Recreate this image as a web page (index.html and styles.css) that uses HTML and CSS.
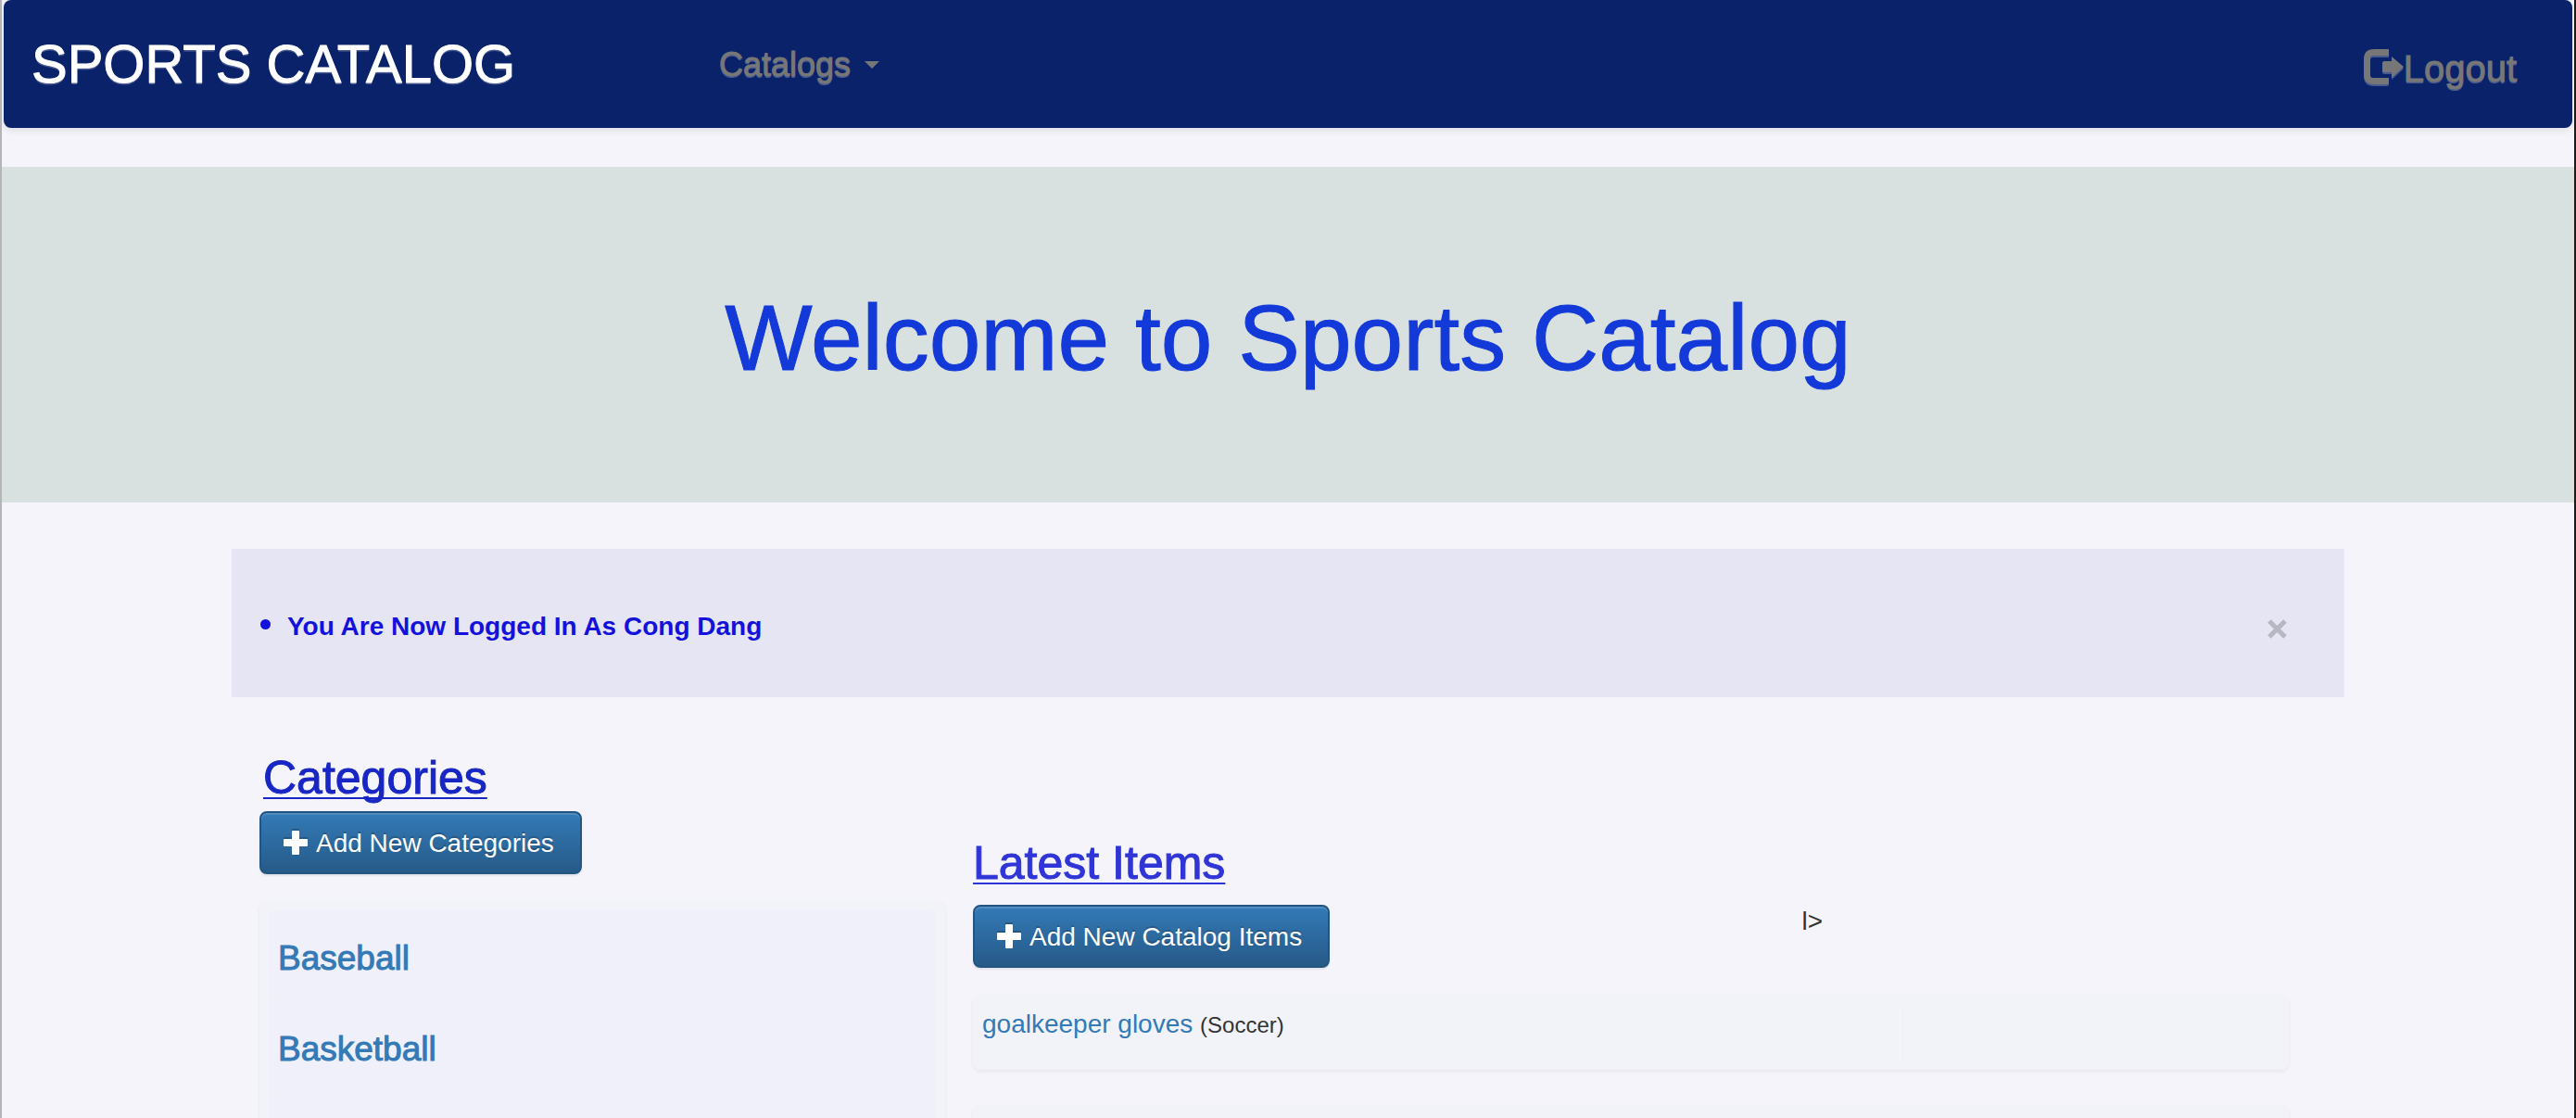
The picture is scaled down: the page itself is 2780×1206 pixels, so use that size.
FILE: index.html
```html
<!DOCTYPE html>
<html lang="en">
<head>
<meta charset="utf-8">
<title>Sports Catalog</title>
<link rel="stylesheet" href="styles.css">
</head>
<body>
<nav class="navbar">
  <a class="brand" href="#">SPORTS CATALOG</a>
  <button class="menu" type="button">Catalogs<span class="caret"></span></button>
  <a class="logout" href="#"><svg class="logout-icon" viewBox="0 0 43 38" aria-hidden="true"><path d="M27 0H11Q0 0 0 11V27Q0 38 11 38H25Q27 38 27 36V31H10Q7 31 7 28V10Q7 7 10 7H27ZM30 8L43 19L30 31V25H22Q20 25 20 23V15Q20 13 22 13H30Z"/></svg>Logout</a>
</nav>
<header class="hero"><h1>Welcome to Sports Catalog</h1></header>
<main class="container">
  <div class="alert">
    <ul><li>You Are Now Logged In As Cong Dang</li></ul>
    <button class="close" type="button" aria-label="Close"><svg viewBox="0 0 21 21" aria-hidden="true"><path d="M2 2L19 19M19 2L2 19"/></svg></button>
  </div>
  <div class="columns">
    <section class="categories">
      <h2>Categories</h2>
      <button class="btn" type="button"><svg class="plus" viewBox="0 0 26 26" aria-hidden="true"><path d="M10 0h6q1 0 1 1v8h8q1 0 1 1v6q0 1-1 1h-8v8q0 1-1 1h-6q-1 0-1-1v-8H1q-1 0-1-1v-6q0-1 1-1h8V1q0-1 1-1z"/></svg>Add New Categories</button>
      <ul class="panel category-list">
        <li><a href="#">Baseball</a></li>
        <li><a href="#">Basketball</a></li>
        <li></li>
      </ul>
    </section>
    <section class="latest">
      <h2>Latest Items</h2>
      <div class="actions">
        <button class="btn" type="button"><svg class="plus" viewBox="0 0 26 26" aria-hidden="true"><path d="M10 0h6q1 0 1 1v8h8q1 0 1 1v6q0 1-1 1h-8v8q0 1-1 1h-6q-1 0-1-1v-8H1q-1 0-1-1v-6q0-1 1-1h8V1q0-1 1-1z"/></svg>Add New Catalog Items</button>
        <span class="stray">l&gt;</span>
      </div>
      <div class="panel item"><div class="item-body"><a href="#">goalkeeper gloves</a> <small>(Soccer)</small></div></div>
      <div class="panel item"></div>
    </section>
  </div>
</main>
</body>
</html>
```
FILE: styles.css
```css
* { box-sizing: border-box; }
html { height: 100%; overflow: hidden; background: #f5f4fa; }
body {
  margin: 0;
  height: 100%;
  overflow: hidden;
  border-left: 2px solid #b5b5b8;
  border-right: 2px solid #1b1c18;
  background: #f5f4fa;
  color: #333;
  font: 28px/40px "Liberation Sans", Arial, sans-serif;
}
a { color: #337ab7; text-decoration: none; }
button { font: inherit; }
h1, h2, ul { margin: 0; padding: 0; }
h1, h2 { font-weight: 400; }

.navbar {
  display: flex;
  align-items: center;
  height: 138px;
  margin: 0 2px 42px;
  padding: 0 60px 0 30px;
  border-radius: 8px;
  background: #0a226a;
  box-shadow: 0 2px 10px rgba(0, 0, 0, .1);
  text-shadow: 0 2px 0 rgba(255, 255, 255, .25);
}
.brand { flex: none; width: 22%; min-width: 540px; color: #fff; font-size: 58px; line-height: 70px; -webkit-text-stroke: 1px #fff; }
.menu {
  display: flex;
  align-items: center;
  margin-left: 152px;
  padding: 2px 0 0;
  border: 0;
  background: none;
  color: #777;
  font-size: 36px;
  text-shadow: inherit;
  -webkit-text-stroke: 1px #777;
}
.caret { margin-left: 15px; border: 8px solid transparent; border-top-color: #777; border-bottom: 0; }
.logout { display: flex; align-items: center; margin-left: auto; padding-top: 10px; color: #777; font-size: 40px; -webkit-text-stroke: 1px #777; }
.logout-icon { width: 43px; height: 38px; margin-bottom: 4px; fill: #777; filter: drop-shadow(0 2px 0 rgba(255, 255, 255, .25)); }

.hero { height: 362px; padding-top: 124px; background: #d8e1e0; text-align: center; }
.hero h1 { color: #1339d9; font-size: 100px; line-height: 120px; -webkit-text-stroke: 1px #1339d9; }

.container { margin: 50px 248px 0; }
.alert {
  display: flex;
  align-items: center;
  justify-content: space-between;
  height: 160px;
  padding: 0 62px 0 60px;
  background: #e5e5f3;
  color: #1212dc;
  font-weight: 700;
}
.alert ul { padding-top: 4px; }
.alert li::marker { font-size: 36px; }
.close { display: flex; padding: 12px 0 0; border: 0; background: none; }
.close svg { width: 21px; height: 21px; fill: none; stroke: #b7b7c2; stroke-width: 5; }

.columns { display: flex; gap: 30px; padding: 57px 60px 0 30px; }
.categories { flex: 740 1 0; }
.latest { flex: 1420 1 0; padding-top: 92px; }
h2 {
  font-size: 50px;
  line-height: 60px;
  text-decoration: underline 2px;
  text-underline-offset: 4px;
  text-decoration-skip-ink: none;
  -webkit-text-stroke: 1px currentColor;
}
.categories h2 { margin-bottom: 6px; padding: 0 4px; color: #1826c4; }
.latest h2 { margin-bottom: 15px; color: #2f35d6; }
.btn {
  display: inline-flex;
  align-items: center;
  gap: 9px;
  height: 68px;
  padding: 1px 28px 0 24px;
  border: 2px solid #245580;
  border-radius: 8px;
  background: linear-gradient(#337ab7, #265a88);
  box-shadow: inset 0 2px 0 rgba(255, 255, 255, .15), 0 2px 2px rgba(0, 0, 0, .075);
  color: #fff;
  text-shadow: 0 -2px 0 rgba(0, 0, 0, .2);
}
.plus { width: 26px; height: 26px; margin-bottom: 2px; fill: #fff; filter: drop-shadow(0 -2px 0 rgba(0, 0, 0, .2)); }
.panel { border-radius: 8px; background: #f1f3f8; box-shadow: 0 2px 4px rgba(0, 0, 0, .06); }
.category-list { margin-top: 29px; padding: 10px; list-style: none; }
.category-list li { height: 98px; padding: 32px 10px; border-bottom: 1px solid #f1f1f6; background: #eff0f9; font-size: 37px; -webkit-text-stroke: 1px #337ab7; }
.category-list li:first-child { border-radius: 8px 8px 0 0; }
.actions { display: flex; align-items: flex-start; justify-content: space-between; margin-bottom: 29px; }
.stray { width: 37%; line-height: 36px; }
.item { height: 81px; margin-bottom: 38px; padding: 10px; }
.item-body { width: 71%; height: 61px; padding-top: 4px; border-right: 1px solid #eeeef3; line-height: 36px; }
.item small { font-size: 24px; }
```
